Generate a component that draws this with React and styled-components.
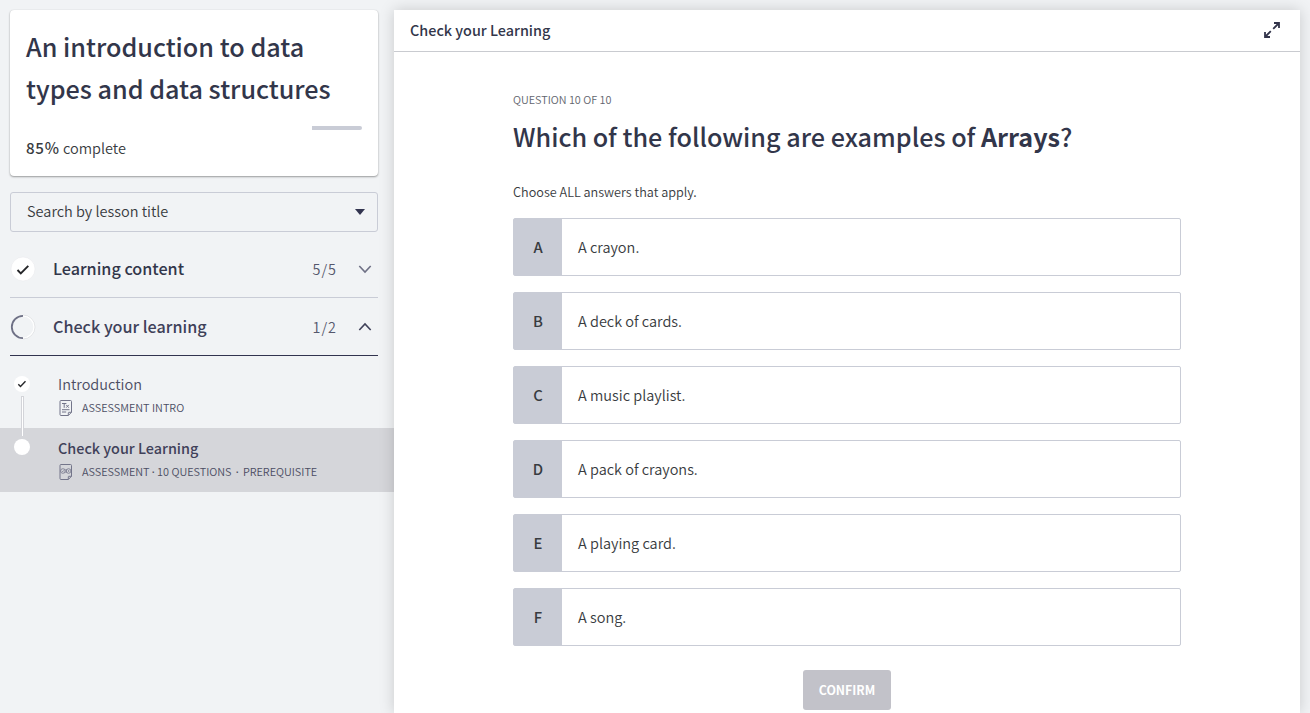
import React from "react";
import styled, { createGlobalStyle } from "styled-components";

const Global = createGlobalStyle`
  * { box-sizing: border-box; }
  html, body { margin: 0; height: 100%; overflow: hidden; }
  body {
    background: #f1f3f5;
    color: #313537;
    font-family: "Source Sans Pro", "Noto Sans CJK SC", "Noto Sans", sans-serif;
  }
  h1, h2, p { margin: 0; }
  button { font-family: inherit; }
`;

const Text = styled.span`
  display: block;
  white-space: nowrap;
  font-size: ${(p) => p.$size}px;
  line-height: ${(p) => p.$line}px;
  font-weight: ${(p) => p.$weight || 350};
  letter-spacing: ${(p) => p.$track || 0}px;
  color: ${(p) => p.$color || "#383b40"};
  strong { font-weight: 700; }
`;
const Percent = styled.span`
  font-weight: 500;
  font-size: 15.2px;
  letter-spacing: 0.7px;
`;
const Separator = styled.span`
  display: inline-block;
  width: ${(p) => p.$width}px;
  text-align: center;
  font-family: "Open Sans", sans-serif;
  font-weight: 600;
  line-height: 1;
`;

const Page = styled.div`
  display: flex;
  height: 713px;
  width: 1310px;
  overflow: hidden;
`;
const Sidebar = styled.aside`
  width: 394px;
  flex: none;
  padding-top: 10px;
`;
const CourseCard = styled.section`
  margin: 0 16px 16px 10px;
  height: 166px;
  padding: 15px 16px;
  background: #fff;
  border-radius: 4px;
  box-shadow: 0 1px 2px rgba(0, 0, 0, 0.36), 0 0 1px rgba(0, 0, 0, 0.15);
`;
const Progress = styled.div`
  display: flex;
  justify-content: flex-end;
  margin: 17px 0 6px;
  height: 4px;
`;
const Remaining = styled.div`
  width: 15%;
  background: #c9ccd6;
  border-radius: 0 2px 2px 0;
`;
const SearchBox = styled.div`
  display: flex;
  align-items: center;
  justify-content: space-between;
  margin: 0 16px 9px 10px;
  height: 40px;
  padding: 0 12px 0 16px;
  border: 1px solid #c9ccd6;
  border-radius: 3px;
  > :first-child { margin-bottom: 2px; }
`;
const SectionRow = styled.div`
  display: grid;
  grid-template-columns: 43px 1fr auto 41px;
  align-items: center;
  margin: 0 16px 0 10px;
  height: ${(p) => p.$height}px;
  border-bottom: 1px solid ${(p) => (p.$open ? "#32344f" : "#c9ccd6")};
  > h2 { margin-bottom: 2px; }
  > :last-child { justify-self: end; margin-right: 6px; }
`;
const Lessons = styled.div`
  padding-top: 8px;
`;
const LessonRow = styled.div`
  display: grid;
  grid-template-columns: 34px 1fr;
  column-gap: 14px;
  padding: 9px 0 0 10px;
  height: 64px;
  background: ${(p) => (p.$active ? "#d5d6da" : "transparent")};
`;
const Track = styled.div`
  display: flex;
  flex-direction: column;
  align-items: center;
  width: 24px;
  padding-top: ${(p) => p.$top}px;
`;
const Dot = styled.div`
  width: 16px;
  height: 16px;
  flex: none;
  display: grid;
  place-items: center;
  background: #fff;
  border-radius: 50%;
`;
const Connector = styled.div`
  width: 3px;
  height: 40px;
  flex: none;
  margin-top: 4px;
  position: relative;
  z-index: 1;
  background: #fff;
  border: solid #d3d4d9;
  border-width: 1px 1px 0;
`;
const Meta = styled.div`
  display: flex;
  align-items: center;
  gap: 8px;
  height: 24px;
  > svg { margin-top: 1px; }
`;
const Panel = styled.main`
  width: 906px;
  margin-top: 10px;
  flex: none;
  background: #fff;
  box-shadow: 0 0 14px rgba(0, 0, 0, 0.17);
  position: relative;
`;
const PanelHeader = styled.header`
  display: flex;
  align-items: center;
  justify-content: space-between;
  height: 42px;
  padding: 0 19px 1px 16px;
  border-bottom: 1px solid #c9cbd0;
`;
const Question = styled.div`
  width: 668px;
  margin: 0 auto;
  padding-top: 37px;
  > h2 { margin: -1px 0 18px; }
`;
const Answers = styled.div`
  display: flex;
  flex-direction: column;
  gap: 16px;
  margin: 16px 0 24px;
`;
const Answer = styled.div`
  display: flex;
  align-items: center;
  height: 58px;
  border: 1px solid #c9ccd6;
  border-radius: 2px;
`;
const Letter = styled.div`
  width: 48px;
  height: 100%;
  margin-right: 16px;
  display: grid;
  place-items: center;
  background: #c9ccd6;
`;
const Confirm = styled.button`
  display: flex;
  align-items: center;
  justify-content: center;
  width: 88px;
  height: 40px;
  margin: 0 auto;
  padding: 0;
  border: 0;
  border-radius: 3px;
  background: #c2c2c9;
`;

const CheckCircle = () => (
  <svg width="26" height="26" viewBox="0 0 26 26" fill="none">
    <circle cx="13" cy="13" r="12" fill="#fff" stroke="#e6e7ea" strokeWidth=".5" />
    <path d="M7.5 14l3.3 3.4 7.5-7.6" stroke="#252629" strokeWidth="1.9" />
  </svg>
);
const HalfCircle = () => (
  <svg width="26" height="26" viewBox="0 0 26 26" fill="none">
    <path d="M13 1.8a11.2 11.2 0 0 1 0 22.4" stroke="#fff" strokeWidth="1.6" />
    <path d="M13 1a12 12 0 0 1 0 24" stroke="#d5d6da" strokeWidth=".6" />
    <path d="M13 1.8a11.2 11.2 0 0 0 0 22.4" stroke="#6e7085" strokeWidth="1.8" />
  </svg>
);
const Chevron = ({ up }) => (
  <svg width="14" height="10" viewBox="0 0 14 10" fill="none">
    <path d={up ? "M1.3 8L7 2l5.7 6" : "M1.3 2L7 8l5.7-6"} stroke={up ? "#3f4159" : "#6e7085"} strokeWidth="1.6" />
  </svg>
);
const SmallCheck = () => (
  <svg width="10" height="10" viewBox="0 0 10 10" fill="none">
    <path d="M1.3 5.2l2.2 2.3 5-5.2" stroke="#252629" strokeWidth="1.4" />
  </svg>
);
const PageIcon = ({ quiz }) => (
  <svg width="16" height="18" viewBox="0 0 16 18" fill="none" stroke="#73758a" strokeWidth="1">
    <path d="M3 1.5h9.5a1 1 0 0 1 1 1v10.8l-3.2 3.2H3a1 1 0 0 1-1-1v-13a1 1 0 0 1 1-1zM13.5 13.3h-2.7a.5.5 0 0 0-.5.5v2.7" />
    {quiz ? (
      <>
        <circle cx="4.9" cy="8" r="2.3" strokeWidth=".8" />
        <circle cx="10.6" cy="8" r="2.3" strokeWidth=".8" />
        <path d="M6.6 6.4c.7.7 1.6.7 2.3 0M6.6 9.6c.7-.7 1.6-.7 2.3 0M4 8l.7.7 1.2-1.4M9.9 7.3l1.4 1.4M11.3 7.3L9.9 8.7" strokeWidth=".8" />
      </>
    ) : (
      <path d="M4 4.5h4.4M6.2 4.5v4.3M8.2 5.9l2.6 2.8M10.8 5.9L8.2 8.7M4 10.7h7.5M4 13h4.2" />
    )}
  </svg>
);
const ExpandIcon = () => (
  <svg width="18" height="18" viewBox="0 0 18 18" fill="none" stroke="#32344a" strokeWidth="1.8">
    <path d="M11 2h5v5M16 2l-5.8 5.8M7 16H2v-5M2 16l5.8-5.8" />
  </svg>
);

const answers = [
  ["A", "A crayon."],
  ["B", "A deck of cards."],
  ["C", "A music playlist."],
  ["D", "A pack of crayons."],
  ["E", "A playing card."],
  ["F", "A song."],
];

export default function App() {
  return (
    <>
      <Global />
      <Page>
        <Sidebar>
          <CourseCard>
            <Text as="h1" $size={25.18} $line={42} $weight={500} $color="#32364a">
              An introduction to data<br />types and data structures
            </Text>
            <Progress><Remaining /></Progress>
            <Text $size={14.5} $line={22}><Percent>85%</Percent> complete</Text>
          </CourseCard>
          <SearchBox>
            <Text $size={14.5} $line={22}>Search by lesson title</Text>
            <svg width="10" height="6" viewBox="0 0 10 6"><path d="M0 0h10L5 6z" fill="#32344f" /></svg>
          </SearchBox>
          <SectionRow $height={57}>
            <CheckCircle />
            <Text as="h2" $size={16.17} $line={24} $weight={500} $color="#32364a">Learning content</Text>
            <Text $size={14.38} $line={24} $track={1} $color="#55576c">5/5</Text>
            <Chevron />
          </SectionRow>
          <SectionRow $height={58} $open>
            <HalfCircle />
            <Text as="h2" $size={16.17} $line={24} $weight={500} $color="#3f4159">Check your learning</Text>
            <Text $size={14.38} $line={24} $track={1} $color="#55576c">1/2</Text>
            <Chevron up />
          </SectionRow>
          <Lessons>
            <LessonRow>
              <Track $top={3}><Dot><SmallCheck /></Dot><Connector /></Track>
              <div>
                <Text $size={14.5} $line={22} $color="#4b4d63">Introduction</Text>
                <Meta><PageIcon /><Text $size={10.86} $line={16} $color="#4b4d63">ASSESSMENT INTRO</Text></Meta>
              </div>
            </LessonRow>
            <LessonRow $active>
              <Track $top={2}><Dot /></Track>
              <div>
                <Text $size={14.4} $line={22} $weight={500} $color="#3f4159">Check your Learning</Text>
                <Meta>
                  <PageIcon quiz />
                  <Text $size={10.86} $line={16} $color="#4b4d63">
                    ASSESSMENT<Separator $width={7.5}>·</Separator>10 QUESTIONS<Separator $width={11.4}>·</Separator>PREREQUISITE
                  </Text>
                </Meta>
              </div>
            </LessonRow>
          </Lessons>
        </Sidebar>
        <Panel>
          <PanelHeader>
            <Text $size={14.4} $line={22} $weight={500} $color="#32364a">Check your Learning</Text>
            <ExpandIcon />
          </PanelHeader>
          <Question>
            <Text $size={10.84} $line={20} $color="#62656e">QUESTION 10 OF 10</Text>
            <Text as="h2" $size={25.18} $line={56} $weight={500} $color="#32364a">
              Which of the following are examples of <strong>Arrays</strong>?
            </Text>
            <Text $size={12.66} $line={20}>Choose ALL answers that apply.</Text>
            <Answers>
              {answers.map(([k, t]) => (
                <Answer key={k}>
                  <Letter><Text $size={14.8} $line={22} $weight={500}>{k}</Text></Letter>
                  <Text $size={14.5} $line={22}>{t}</Text>
                </Answer>
              ))}
            </Answers>
            <Confirm><Text $size={12.3} $line={20} $weight={700} $color="#fff">CONFIRM</Text></Confirm>
          </Question>
        </Panel>
      </Page>
    </>
  );
}
